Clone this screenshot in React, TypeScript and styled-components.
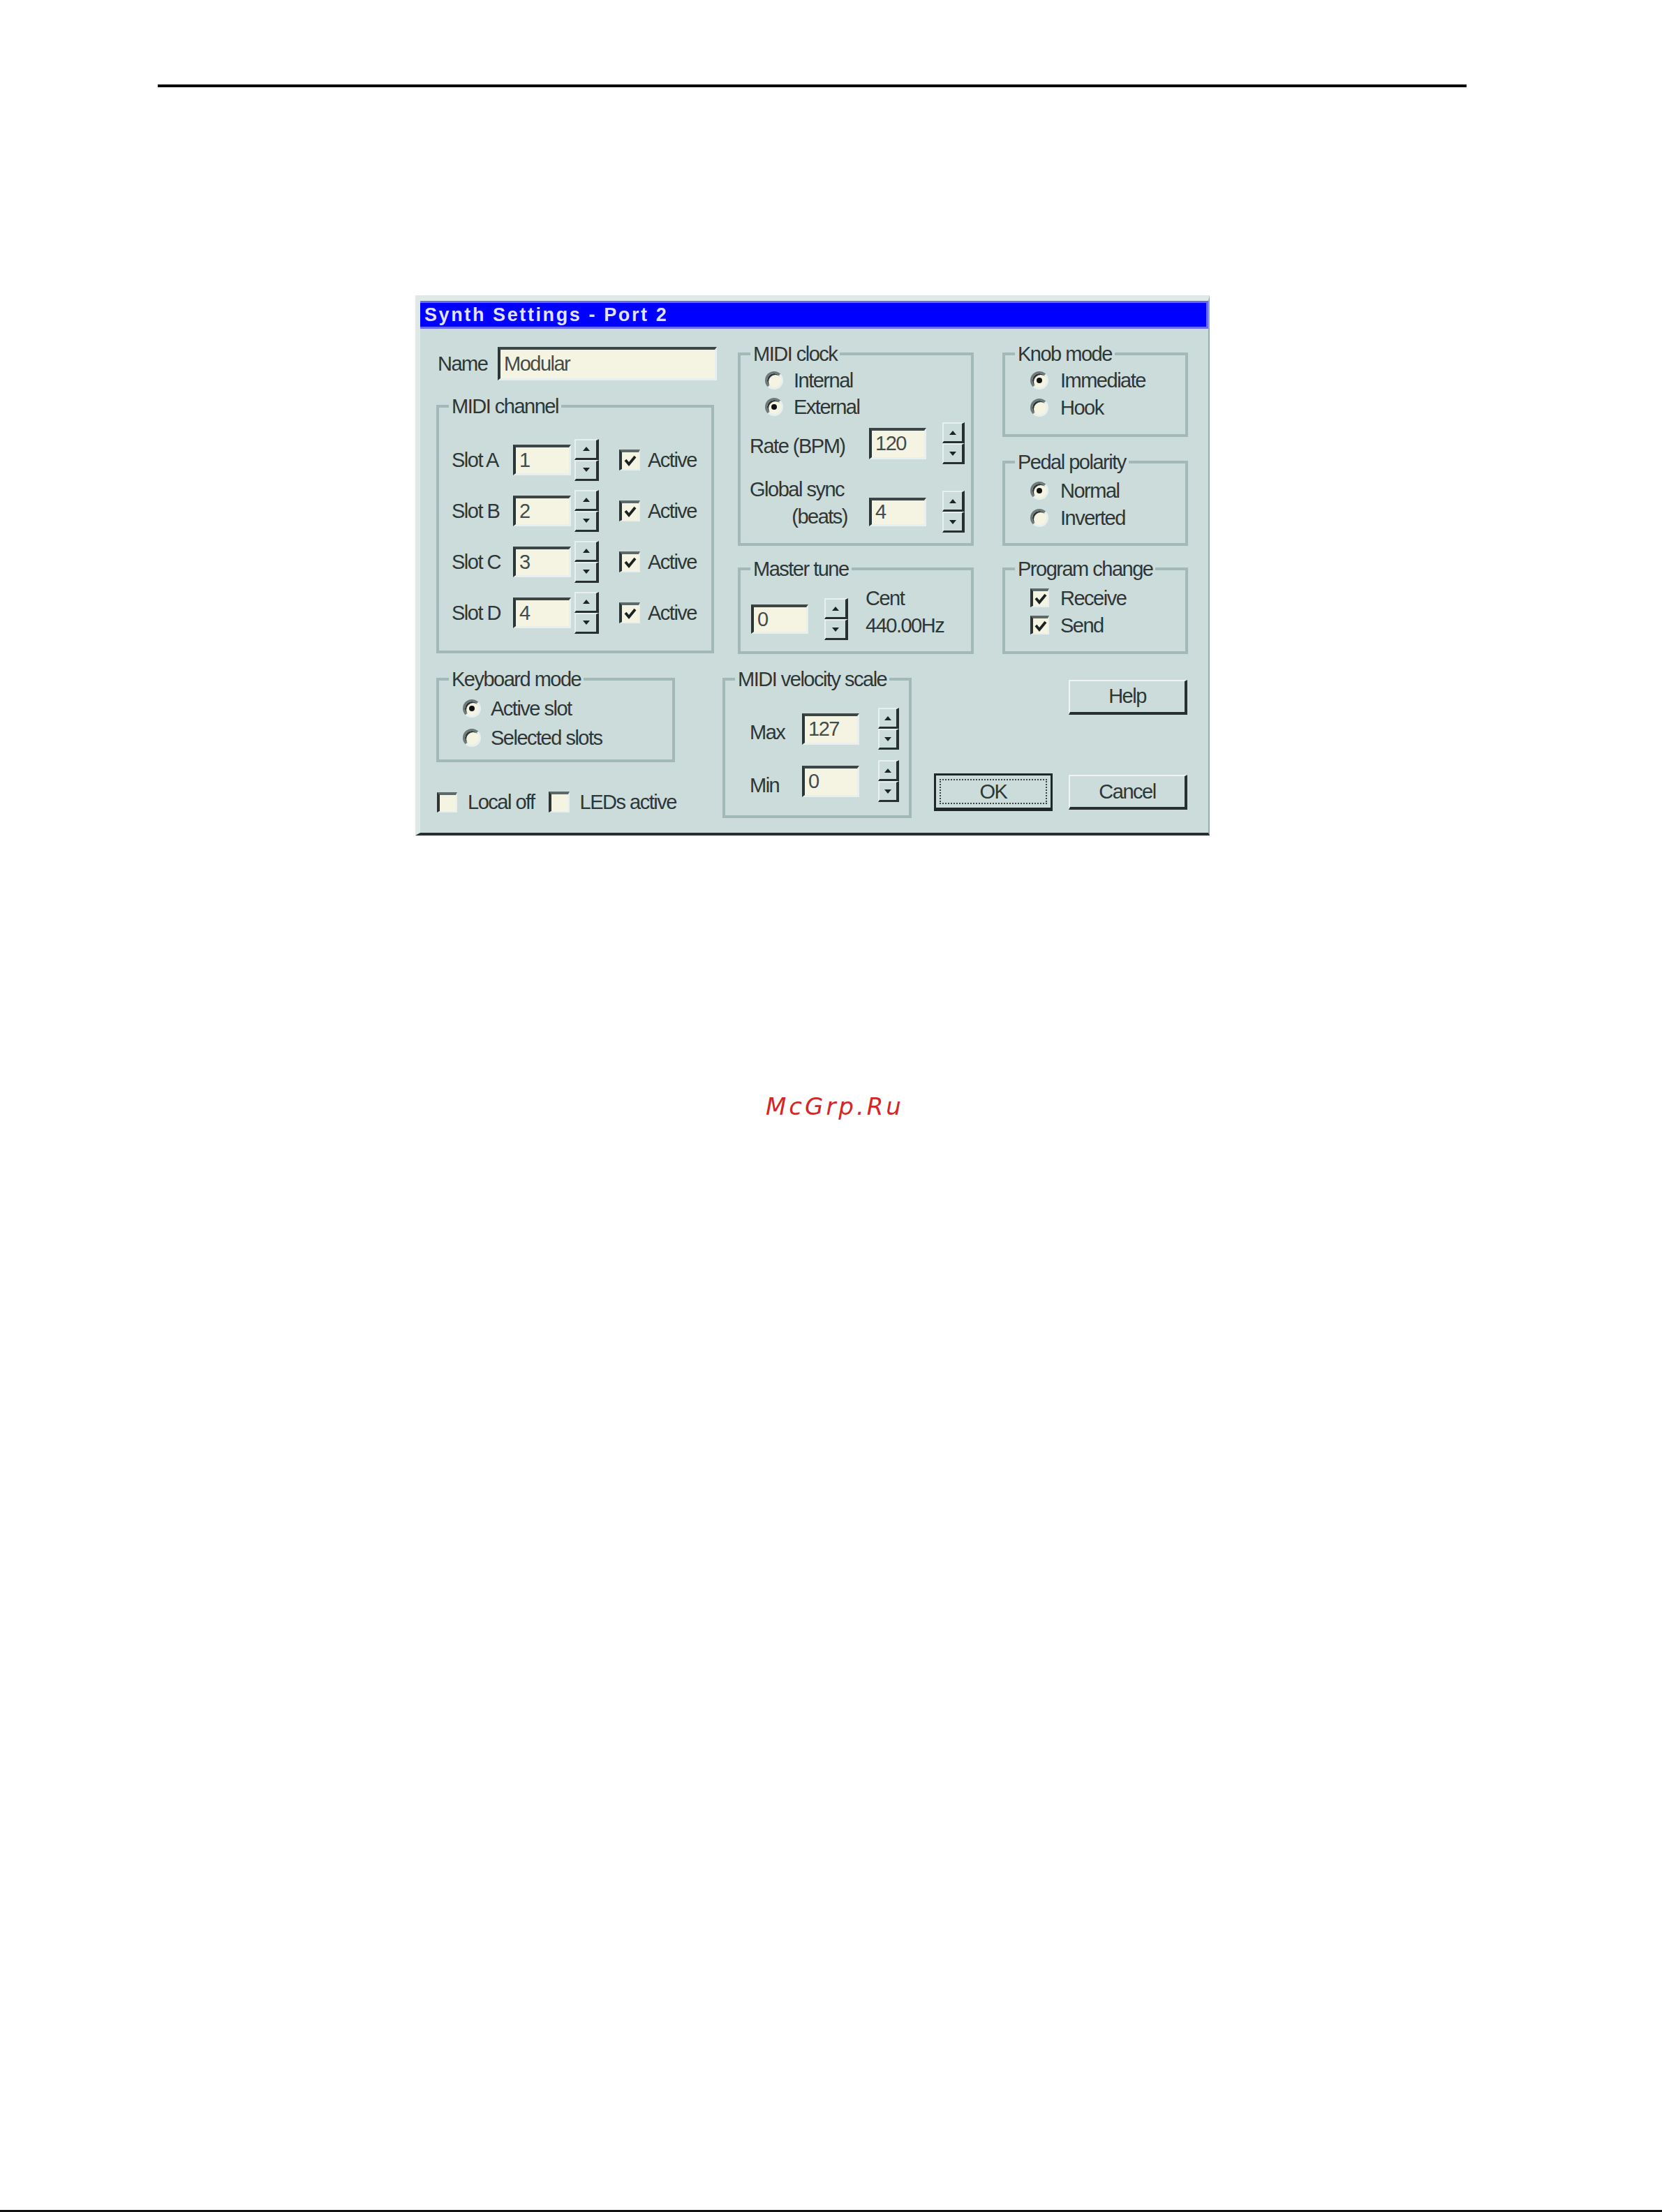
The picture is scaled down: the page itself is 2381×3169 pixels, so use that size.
import React from 'react';
import styled, { createGlobalStyle } from 'styled-components';

const face = '#cbdcdb';
const field = '#f5f4e2';
const shade = '#263030';
const hilite = '#e8f0ef';
const groove = '#a2b9b7';

const GlobalStyle = createGlobalStyle`
  html, body { margin: 0; padding: 0; background: #fff; }
  * { box-sizing: border-box; }
`;

const Page = styled.div`
  width: 2381px;
  height: 3169px;
  display: flex;
  flex-direction: column;
  align-items: flex-start;
  background: #fff;
  overflow: hidden;
`;

const TopRule = styled.div`
  margin: 121px 0 0 226px;
  width: 1875px;
  height: 4px;
  background: #000;
`;

const Dialog = styled.div`
  margin: 298px 0 0 595px;
  width: 1138px;
  height: 774px;
  display: flex;
  flex-direction: column;
  background: ${face};
  border-top: 8px solid #dfe9e8;
  border-left: 7px solid #dfe9e8;
  border-right: 2px solid #98adab;
  border-bottom: 4px solid ${shade};
  font-family: 'Liberation Sans', Arial, sans-serif;
  font-size: 29px;
  letter-spacing: -1.5px;
  color: #2e3636;
`;

const TitleBar = styled.div`
  height: 40px;
  flex-shrink: 0;
  display: flex;
  align-items: center;
  padding-left: 6px;
  background: #0000ff;
  border-top: 3px solid #6b6bf2;
  border-bottom: 3px solid #6b6bf2;
  border-right: 3px solid #6b6bf2;
`;

const Title = styled.span`
  font-weight: 700;
  font-size: 27px;
  letter-spacing: 2.6px;
  color: #e2e2fa;
`;

const Body = styled.div`
  display: flex;
  flex-direction: column;
  padding: 24px 0 0 23px;
`;

const Row = styled.div<{ $mt?: number }>`
  display: flex;
  align-items: flex-start;
  margin-top: ${({ $mt }) => $mt ?? 0}px;
`;

const Column = styled.div<{ $w: number; $mr?: number }>`
  display: flex;
  flex-direction: column;
  width: ${({ $w }) => $w}px;
  margin-right: ${({ $mr }) => $mr ?? 0}px;
  flex-shrink: 0;
`;

const Group = styled.fieldset<{ $w: number; $h: number; $mt?: number; $ml?: number }>`
  margin: ${({ $mt }) => $mt ?? 0}px 0 0 ${({ $ml }) => $ml ?? 0}px;
  padding: 0;
  min-width: 0;
  width: ${({ $w }) => $w}px;
  height: ${({ $h }) => $h}px;
  border: 4px solid ${groove};
  flex-shrink: 0;
`;

const Legend = styled.legend`
  margin-left: 14px;
  padding: 0 4px;
  height: 24px;
  line-height: 24px;
  white-space: nowrap;
`;

const Inner = styled.div<{ $pt: number }>`
  display: flex;
  flex-direction: column;
  padding-top: ${({ $pt }) => $pt}px;
`;

const Line = styled.div<{ $h: number; $pl?: number; $mt?: number }>`
  display: flex;
  align-items: center;
  height: ${({ $h }) => $h}px;
  padding-left: ${({ $pl }) => $pl ?? 0}px;
  margin-top: ${({ $mt }) => $mt ?? 0}px;
  flex-shrink: 0;
`;

const Label = styled.span<{ $w?: number; $dy?: number; $ml?: number }>`
  display: inline-block;
  width: ${({ $w }) => ($w ? `${$w}px` : 'auto')};
  margin-left: ${({ $ml }) => $ml ?? 0}px;
  padding-top: ${({ $dy }) => ($dy ?? 0) * 2}px;
  line-height: 30px;
  white-space: nowrap;
  flex-shrink: 0;
`;

const LabelStack = styled.div<{ $w: number; $pr?: number; $pb?: number; $ml?: number }>`
  display: flex;
  flex-direction: column;
  align-items: flex-start;
  width: ${({ $w }) => $w}px;
  padding-right: ${({ $pr }) => $pr ?? 0}px;
  padding-bottom: ${({ $pb }) => $pb ?? 0}px;
  margin-left: ${({ $ml }) => $ml ?? 0}px;
  line-height: 39px;
  white-space: nowrap;
  flex-shrink: 0;
`;

const StackLine = styled.span<{ $end?: boolean }>`
  align-self: ${({ $end }) => ($end ? 'flex-end' : 'flex-start')};
`;

const TextField = styled.div<{ $w: number; $h: number }>`
  width: ${({ $w }) => $w}px;
  height: ${({ $h }) => $h}px;
  display: flex;
  align-items: center;
  padding-left: 5px;
  background: ${field};
  border-top: 4px solid #3c4646;
  border-left: 4px solid #2c3535;
  border-right: 3px solid ${hilite};
  border-bottom: 3px solid ${hilite};
  color: #434c4c;
  flex-shrink: 0;
`;

const SpinField = styled.div<{ $mt?: number }>`
  display: flex;
  align-items: center;
  margin-top: ${({ $mt }) => $mt ?? 0}px;
  flex-shrink: 0;
`;

const SpinColumn = styled.div<{ $gap: number }>`
  display: flex;
  flex-direction: column;
  margin-left: ${({ $gap }) => $gap}px;
`;

const SpinButton = styled.div<{ $w: number }>`
  width: ${({ $w }) => $w}px;
  height: 30px;
  display: flex;
  align-items: center;
  justify-content: center;
  background: ${face};
  border-top: 2px solid ${hilite};
  border-left: 2px solid ${hilite};
  border-right: 4px solid ${shade};
  border-bottom: 3px solid ${shade};
`;

const Arrow = ({ up }: { up?: boolean }) => (
  <svg width="10" height="6" viewBox="0 0 10 6">
    <polygon points={up ? '5,0 10,6 0,6' : '0,0 10,0 5,6'} fill="#1c2424" />
  </svg>
);

const Spin = ({ value, fw, fh, gap, sw = 33 }: { value: string; fw: number; fh: number; gap: number; sw?: number }) => (
  <>
    <TextField $w={fw} $h={fh}>{value}</TextField>
    <SpinColumn $gap={gap}>
      <SpinButton $w={sw}>
        <Arrow up />
      </SpinButton>
      <SpinButton $w={sw}>
        <Arrow />
      </SpinButton>
    </SpinColumn>
  </>
);

const RadioMark = styled.span<{ $on?: boolean }>`
  width: 26px;
  height: 26px;
  border-radius: 50%;
  display: flex;
  align-items: center;
  justify-content: center;
  background: ${field};
  border: 3px solid;
  border-color: #6d7878 ${hilite} ${hilite} #6d7878;
  box-shadow: inset 2px 2px 0 #2c3434;
  flex-shrink: 0;

  &::after {
    content: '';
    display: ${({ $on }) => ($on ? 'block' : 'none')};
    width: 8px;
    height: 8px;
    border-radius: 50%;
    background: #111;
  }
`;

const CheckMark = styled.span<{ $size: number; $ml?: number }>`
  width: ${({ $size }) => $size}px;
  height: ${({ $size }) => $size}px;
  margin-left: ${({ $ml }) => $ml ?? 0}px;
  display: flex;
  align-items: center;
  justify-content: center;
  background: ${field};
  border-top: 4px solid #5e6a6a;
  border-left: 4px solid #2c3434;
  border-right: 2px solid ${hilite};
  border-bottom: 2px solid ${hilite};
  flex-shrink: 0;
`;

const Tick = () => (
  <svg width="18" height="16" viewBox="0 0 9 8">
    <polyline points="1,3.5 3.5,6.5 8,1" fill="none" stroke="#1a2222" strokeWidth="1.9" />
  </svg>
);

const Check = ({ on, size, ml }: { on?: boolean; size: number; ml?: number }) => (
  <CheckMark $size={size} $ml={ml}>
    {on ? <Tick /> : null}
  </CheckMark>
);

const Buttons = styled.div`
  display: grid;
  grid-template-columns: 170px 170px;
  grid-template-rows: 53px 54px;
  column-gap: 23px;
  row-gap: 83px;
  align-items: center;
  margin: 11px 0 0 32px;
`;

const Button = styled.button<{ $col?: number }>`
  grid-column: ${({ $col }) => $col ?? 'auto'};
  height: 50px;
  padding: 0;
  font: inherit;
  letter-spacing: inherit;
  color: inherit;
  background: ${face};
  border-top: 2px solid #f0f5f4;
  border-left: 2px solid #f0f5f4;
  border-right: 4px solid ${shade};
  border-bottom: 4px solid ${shade};
`;

const DefaultButton = styled(Button)`
  height: 54px;
  border: 3px solid #1f2828;
  border-bottom-width: 5px;
  display: flex;
  padding: 5px;
`;

const FocusRing = styled.span`
  flex: 1;
  display: flex;
  align-items: center;
  justify-content: center;
  border: 2px dotted #3a4444;
`;

const Watermark = styled.div`
  margin: 368px 0 0 1097px;
  font-family: 'DejaVu Sans', sans-serif;
  font-style: italic;
  font-size: 34px;
  line-height: 40px;
  letter-spacing: 4px;
  color: #d42626;
`;

const Spacer = styled.div`
  flex: 1;
`;

const BottomRule = styled.div`
  width: 100%;
  height: 3px;
  background: #111;
`;

const slots = ['A', 'B', 'C', 'D'];

export default function App() {
  return (
    <Page>
      <GlobalStyle />
      <TopRule />
      <Dialog>
        <TitleBar>
          <Title>Synth Settings - Port 2</Title>
        </TitleBar>
        <Body>
          <Row>
            <Column $w={398} $mr={34}>
              <Line $h={48} $pl={2} $mt={2}>
                <Label $w={86} $dy={-3}>Name</Label>
                <TextField $w={314} $h={48}>Modular</TextField>
              </Line>
              <Group $w={398} $h={366} $mt={25}>
                <Legend>MIDI channel</Legend>
                <Inner $pt={28}>
                  {slots.map((s, i) => (
                    <Line key={s} $h={73} $pl={18}>
                      <Label $w={88}>Slot {s}</Label>
                      <Spin value={String(i + 1)} fw={83} fh={44} gap={5} sw={35} />
                      <Check on size={30} ml={29} />
                      <Label $ml={11}>Active</Label>
                    </Line>
                  ))}
                </Inner>
              </Group>
            </Column>

            <Column $w={338} $mr={41}>
              <Group $w={338} $h={287}>
                <Legend>MIDI clock</Legend>
                <Inner $pt={7}>
                  <Line $h={38} $pl={35}>
                    <RadioMark />
                    <Label $ml={15}>Internal</Label>
                  </Line>
                  <Line $h={38} $pl={35}>
                    <RadioMark $on />
                    <Label $ml={15}>External</Label>
                  </Line>
                  <Line $h={64} $pl={13} $mt={1}>
                    <Label $w={171} $dy={4}>Rate (BPM)</Label>
                    <SpinField>
                      <Spin value="120" fw={82} fh={45} gap={23} sw={32} />
                    </SpinField>
                  </Line>
                  <Row $mt={15}>
                    <LabelStack $w={171} $pr={31} $ml={13}>
                      <StackLine>Global sync</StackLine>
                      <StackLine $end>(beats)</StackLine>
                    </LabelStack>
                    <SpinField $mt={21}>
                      <Spin value="4" fw={82} fh={41} gap={23} sw={32} />
                    </SpinField>
                  </Row>
                </Inner>
              </Group>
              <Group $w={338} $h={134} $mt={21}>
                <Legend>Master tune</Legend>
                <Inner $pt={30}>
                  <Line $h={60} $pl={15}>
                    <Spin value="0" fw={82} fh={42} gap={23} sw={34} />
                    <LabelStack $w={150} $ml={25} $pb={20}>
                      <StackLine>Cent</StackLine>
                      <StackLine>440.00Hz</StackLine>
                    </LabelStack>
                  </Line>
                </Inner>
              </Group>
            </Column>

            <Column $w={266}>
              <Group $w={266} $h={131}>
                <Legend>Knob mode</Legend>
                <Inner $pt={6}>
                  <Line $h={39} $pl={36}>
                    <RadioMark $on />
                    <Label $ml={17}>Immediate</Label>
                  </Line>
                  <Line $h={39} $pl={36}>
                    <RadioMark />
                    <Label $ml={17}>Hook</Label>
                  </Line>
                </Inner>
              </Group>
              <Group $w={266} $h={132} $mt={24}>
                <Legend>Pedal polarity</Legend>
                <Inner $pt={9}>
                  <Line $h={39} $pl={36}>
                    <RadioMark $on />
                    <Label $ml={17}>Normal</Label>
                  </Line>
                  <Line $h={39} $pl={36}>
                    <RadioMark />
                    <Label $ml={17}>Inverted</Label>
                  </Line>
                </Inner>
              </Group>
              <Group $w={266} $h={134} $mt={21}>
                <Legend>Program change</Legend>
                <Inner $pt={10}>
                  <Line $h={39} $pl={36}>
                    <Check on size={27} />
                    <Label $ml={16}>Receive</Label>
                  </Line>
                  <Line $h={39} $pl={36}>
                    <Check on size={27} />
                    <Label $ml={16}>Send</Label>
                  </Line>
                </Inner>
              </Group>
            </Column>
          </Row>

          <Row $mt={24}>
            <Column $w={342}>
              <Group $w={342} $h={131}>
                <Legend>Keyboard mode</Legend>
                <Inner $pt={9}>
                  <Line $h={42} $pl={34}>
                    <RadioMark $on />
                    <Label $ml={14}>Active slot</Label>
                  </Line>
                  <Line $h={42} $pl={34}>
                    <RadioMark />
                    <Label $ml={14}>Selected slots</Label>
                  </Line>
                </Inner>
              </Group>
              <Line $h={40} $pl={1} $mt={37}>
                <Check size={29} />
                <Label $ml={15}>Local off</Label>
                <Check size={30} ml={20} />
                <Label $ml={15}>LEDs active</Label>
              </Line>
            </Column>

            <Group $w={271} $h={211} $ml={68}>
              <Legend>MIDI velocity scale</Legend>
              <Inner $pt={29}>
                <Line $h={60} $pl={35}>
                  <Label $w={75} $dy={5}>Max</Label>
                  <Spin value="127" fw={82} fh={45} gap={27} sw={30} />
                </Line>
                <Line $h={60} $pl={35} $mt={15}>
                  <Label $w={75} $dy={6}>Min</Label>
                  <Spin value="0" fw={82} fh={45} gap={27} sw={30} />
                </Line>
              </Inner>
            </Group>

            <Buttons>
              <Button $col={2}>Help</Button>
              <DefaultButton>
                <FocusRing>OK</FocusRing>
              </DefaultButton>
              <Button>Cancel</Button>
            </Buttons>
          </Row>
        </Body>
      </Dialog>
      <Watermark>McGrp.Ru</Watermark>
      <Spacer />
      <BottomRule />
    </Page>
  );
}
